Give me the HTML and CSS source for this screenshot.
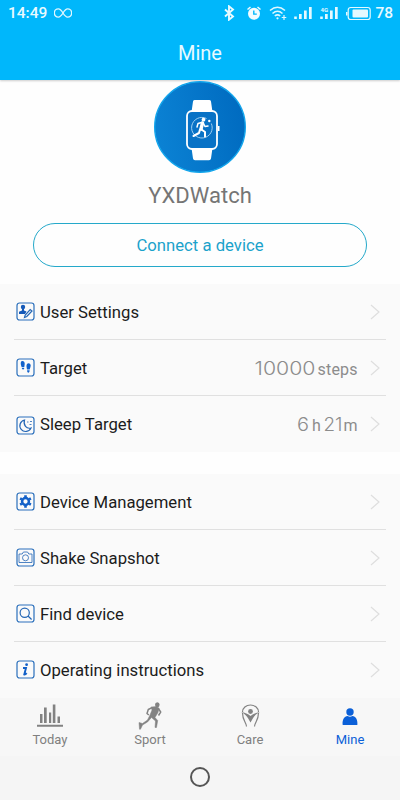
FILE: index.html
```html
<!DOCTYPE html>
<html lang="en">
<head>
    <meta charset="UTF-8">
    <meta name="viewport" content="width=device-width, initial-scale=1.0">
    <title>Mine</title>
    <link rel="stylesheet" href="styles.css">
</head>
<body>
    <header class="header">
        <div class="status-bar">
            <span class="time">14:49</span>
            <svg class="infinity" width="18" height="10" viewBox="0 0 18 10" fill="none" stroke="#dff7ff" stroke-width="1.4">
                <path d="M9 5C7.3 2.3 6 .9 4.4.9a4.1 4.1 0 0 0 0 8.200C6 9.100 7.300 7.700 9 5s3-4.100 4.600-4.100a4.100 4.100 0 0 1 0 8.200C12 9.100 10.700 7.700 9 5z"/>
            </svg>
            <svg class="status-icons" width="150" height="16" viewBox="222 4 150 16">
                <path d="M225 8.500l8 7-4 3.200V5.300l4 3.200-8 7" fill="none" stroke="#e9faff" stroke-width="1.900"/>
                <circle cx="254" cy="12.700" r="6" fill="#f2fcff"/>
                <path d="M247.500 8.500l3-2.500M260.500 8.500l-3-2.500" stroke="#f2fcff" stroke-width="1.500"/>
                <path d="M253.800 9.500v3.600h3" fill="none" stroke="#00b7fb" stroke-width="1.400"/>
                <g fill="none" stroke="#dff7ff" stroke-width="1.600">
                    <path d="M270 9.500q7.500-6.500 15 0M272.500 12.500q5-4.500 10 0M274.800 15q2.700-2.400 5.400 0"/>
                    <path d="M284 14v5M281.700 16.500h4.600" stroke-width="1.200"/>
                </g>
                <circle cx="277.500" cy="17.300" r="1.100" fill="#dff7ff"/>
                <g fill="#e4f9ff">
                    <path d="M294.200 15.500h2.600v2.500h-2.600zM299 13h2.700v5H299zM304 9.500h2.700V18H304zM309 6h2.700v12H309z"/>
                    <path d="M320.200 15.500h2.600v2.500h-2.600zM325 13h2.700v5H325zM330 9.500h2.700V18H330zM335 6h2.700v12H335z"/>
                    <text x="320.500" y="10.500" font-size="6" font-weight="700">4G</text>
                    <path d="M346 11h1.500v3.500H346z"/>
                    <rect x="352.500" y="8.500" width="15.500" height="8" rx="1"/>
                </g>
                <rect x="348.200" y="6.500" width="22" height="12" rx="2.500" fill="none" stroke="#e4f9ff" stroke-width="1.200"/>
            </svg>
            <span class="battery">78</span>
        </div>
        <h1>Mine</h1>
    </header>

    <section class="profile">
        <svg class="avatar" width="92" height="92" viewBox="0 0 92 92">
            <defs>
                <linearGradient id="disc" x1="0" y1=".6" x2="1" y2=".4">
                    <stop offset="0" stop-color="#0b82d4"/>
                    <stop offset="1" stop-color="#006bc0"/>
                </linearGradient>
            </defs>
            <circle cx="46" cy="46" r="45.300" fill="url(#disc)" stroke="#12a5ec" stroke-width="1.400"/>
            <path d="M39 20.500q0-1.500 1.500-1.500h15q1.500 0 1.500 1.500l1.500 10.500h-21zM37.500 67h21L57 77.500q-.3 1.800-2 1.800H41q-1.700 0-2-1.800z" fill="#fff"/>
            <rect x="33" y="30" width="30" height="38" rx="5" fill="#0872c6" stroke="#fff" stroke-width="1.800"/>
            <rect x="64" y="45" width="1.500" height="5" fill="#fff"/>
            <path d="M52.500 37.500a10.300 10.300 0 1 0 4.800 5" fill="none" stroke="#9fd0f2" stroke-width="1"/>
            <circle cx="55.300" cy="40" r="1.200" fill="#fff"/>
            <circle cx="49.500" cy="38.700" r="1.900" fill="#fff"/>
            <g fill="none" stroke="#fff" stroke-linecap="round" stroke-linejoin="round">
                <path d="M48.500 42l-1.500 6" stroke-width="3.400"/>
                <path d="M47.500 41.500l-3.500 1-1 3.500M49.500 42.500l1.500 3 3-.5" stroke-width="1.500"/>
                <path d="M47.500 48.500l3.500 2.500v4.500M46 48.500l-1 3.500-5.500 3" stroke-width="2"/>
            </g>
        </svg>
        <h2>YXDWatch</h2>
        <button class="connect">Connect a device</button>
    </section>

    <ul class="menu">
        <li>
            <svg class="icon" width="19" height="19" viewBox="0 0 19 19">
                <rect class="frame" x="1" y="1" width="17" height="17" rx="2.500"/>
                <circle cx="7" cy="5" r="2.200" fill="#1559b8"/>
                <path d="M6 7h2v1.500l2.500 1-1.500 2.500H3V9.700L6 8.500z" fill="#1559b8"/>
                <path class="line" d="M8.500 15.500l.7-2.500 5-5.500 1.800 1.500-5.200 5.500z"/>
            </svg>
            <span class="label">User Settings</span>
            <svg class="arrow" width="10" height="16" viewBox="0 0 10 16"><path d="M1 1l8 7-8 7"/></svg>
        </li>
        <li>
            <svg class="icon" width="19" height="19" viewBox="0 0 19 19">
                <rect class="frame" x="1" y="1" width="17" height="17" rx="2.500"/>
                <g fill="#1262cc">
                    <path d="M5.200 3.500c1.700-1.200 3.700.2 3.500 2.500L8.300 9H5.600C5 7 4.200 5 5.200 3.500zM5.700 9.800h2.500c.4 2-2 2.600-2.500 0z"/>
                    <path d="M11 6c1.200-1.300 3.500-.7 3.700 1.300 0 1.500-.5 2.700-1 4.200H11C10.700 9.500 10 7.500 11 6zM11.100 12.300h2.500c.2 3-2.700 3.200-2.500 0z"/>
                </g>
            </svg>
            <span class="label">Target</span>
            <svg class="value" width="105" height="24" viewBox="0 0 105 24">
                <text class="num" x="1.500" y="19" textLength="61" lengthAdjust="spacingAndGlyphs">10000</text>
                <text x="64.500" y="19" textLength="40">steps</text>
            </svg>
            <svg class="arrow" width="10" height="16" viewBox="0 0 10 16"><path d="M1 1l8 7-8 7"/></svg>
        </li>
        <li>
            <svg class="icon low" width="19" height="19" viewBox="0 0 19 19">
                <rect class="frame" x="1" y="1" width="17" height="17" rx="2.500"/>
                <path class="line" d="M8.500 4a5.800 5.800 0 1 0 6.500 8c-4.500 1.300-8-3-6.500-8z"/>
                <path class="line thin" d="M11 6h1.500M14 5.500h2M13.500 8.500h2"/>
            </svg>
            <span class="label">Sleep Target</span>
            <svg class="value" width="105" height="24" viewBox="0 0 105 24">
                <text class="num" x="44" y="19" textLength="12" lengthAdjust="spacingAndGlyphs">6</text>
                <text x="59" y="19">h</text>
                <text class="num" x="70.500" y="19" textLength="19" lengthAdjust="spacingAndGlyphs">21</text>
                <text x="90.500" y="19">m</text>
            </svg>
            <svg class="arrow" width="10" height="16" viewBox="0 0 10 16"><path d="M1 1l8 7-8 7"/></svg>
        </li>
    </ul>

    <ul class="menu">
        <li>
            <svg class="icon" width="19" height="19" viewBox="0 0 19 19">
                <rect class="frame" x="1" y="1" width="17" height="17" rx="2.500"/>
                <circle cx="9.500" cy="9.500" r="3.400" fill="none" stroke="#1260c8" stroke-width="2.500"/>
                <path d="M9.500 3.300v2M9.500 13.700v2M4.100 6.400l1.800 1M13.100 11.600l1.800 1M4.100 12.600l1.800-1M13.100 7.400l1.800-1" stroke="#1260c8" stroke-width="2.600"/>
            </svg>
            <span class="label">Device Management</span>
            <svg class="arrow" width="10" height="16" viewBox="0 0 10 16"><path d="M1 1l8 7-8 7"/></svg>
        </li>
        <li>
            <svg class="icon" width="19" height="19" viewBox="0 0 19 19">
                <rect class="frame" x="1" y="1" width="17" height="17" rx="2.500"/>
                <path class="line thin" d="M3 6h3.200l1.200-2h4.200l1.200 2H16v8.500H3z"/>
                <circle class="line thin" cx="9.500" cy="9.800" r="3"/>
            </svg>
            <span class="label">Shake Snapshot</span>
            <svg class="arrow" width="10" height="16" viewBox="0 0 10 16"><path d="M1 1l8 7-8 7"/></svg>
        </li>
        <li>
            <svg class="icon" width="19" height="19" viewBox="0 0 19 19">
                <rect class="frame" x="1" y="1" width="17" height="17" rx="2.500"/>
                <circle class="line" cx="8.700" cy="8.700" r="4.600"/>
                <path class="line" d="M12 12l3.600 3.500"/>
            </svg>
            <span class="label">Find device</span>
            <svg class="arrow" width="10" height="16" viewBox="0 0 10 16"><path d="M1 1l8 7-8 7"/></svg>
        </li>
        <li>
            <svg class="icon" width="19" height="19" viewBox="0 0 19 19">
                <rect class="frame" x="1" y="1" width="17" height="17" rx="2.500"/>
                <circle cx="10.600" cy="4.700" r="1.400" fill="#1260c8"/>
                <path d="M7 8h3l-1.700 6.500c.6.200 1.600-.4 2.400-1.300" fill="none" stroke="#1260c8" stroke-width="1.900"/>
            </svg>
            <span class="label">Operating instructions</span>
            <svg class="arrow" width="10" height="16" viewBox="0 0 10 16"><path d="M1 1l8 7-8 7"/></svg>
        </li>
    </ul>

    <nav class="tabs">
        <a class="tab">
            <svg width="30" height="28" viewBox="0 0 30 28" fill="#828282">
                <path d="M5 12h2.500v9H5zM9 5.500h2.700V21H9zM14 10.500h2.200V21H14zM17.800 2.500h2.600V21h-2.600zM22.500 14.500h2.500V21h-2.500zM2 22.800h26v2H2z"/>
            </svg>
            <span>Today</span>
        </a>
        <a class="tab">
            <svg width="30" height="28" viewBox="0 0 30 28" fill="#828282" stroke="#828282" stroke-linejoin="round">
                <ellipse cx="22.300" cy="2.800" rx="2.300" ry="2.500" stroke="none"/>
                <path d="M16 5l6-.5 2 2-1 4-3 5 2.700 3-1.200 7h-1.500l.5-6.500-4-3.500-4 4.500-5 3-2 4.200H4.500L4 20.500l3.500 1 5-3.500 2.500-5 2-5z" stroke-width=".5"/>
                <path d="M17 5.700l-3.700 1.800-1.300 4 1.800 1.500M23 6l2.700 4-2.200 3.500" fill="none" stroke-width="1.500"/>
            </svg>
            <span>Sport</span>
        </a>
        <a class="tab">
            <svg width="30" height="28" viewBox="0 0 30 28" fill="none" stroke="#828282">
                <path d="M7.500 10a8 7 0 0 1 16 0M11.500 24.500c0-4-4-6-4-13.500M19.500 24.500c0-4 4-6 4-13.500" stroke-width="1.200"/>
                <circle cx="15.500" cy="9.500" r="2.400" fill="#828282" stroke="none"/>
                <path d="M6 10c4 .5 7 2 9.500 4 2.500-2 5.500-3.500 9.500-4-3.500 1.500-6 4-7.200 6.500l-2.300 4-2.300-4C12 14 9.500 11.500 6 10z" fill="#828282" stroke="none"/>
            </svg>
            <span>Care</span>
        </a>
        <a class="tab active">
            <svg width="30" height="28" viewBox="0 0 30 28" fill="#0b60d8">
                <circle cx="15" cy="10" r="3.700"/>
                <path d="M7.600 22.500c-.4-5 1.700-8 5-8.500q2.400 1.500 4.800 0c3.300.5 5.400 3.500 5 8.500q0 .5-.7.500H8.300q-.7 0-.7-.5z"/>
            </svg>
            <span>Mine</span>
        </a>
    </nav>
    <footer class="system-nav"><div class="home"></div></footer>
</body>
</html>
```
FILE: styles.css
```css
* {
    box-sizing: border-box;
}
body {
    margin: 0;
    width: 400px;
    height: 800px;
    overflow: hidden;
    background-color: #fefefe;
    font-family: Roboto, sans-serif;
    color: #1c1c1c;
}
.header {
    height: 80px;
    background-color: #00b7fb;
    color: #e8faff;
    box-shadow: 0 1px 2px rgba(0, 0, 0, 0.2);
}
.status-bar {
    display: flex;
    align-items: center;
    height: 25px;
    padding: 0 7px 0 8px;
    font-size: 15.5px;
    font-weight: 500;
}
.infinity {
    margin-left: 7px;
}
.status-icons {
    margin-left: auto;
}
.battery {
    margin-left: 3px;
}
h1 {
    margin: 16px 0 0;
    font-size: 20px;
    font-weight: 400;
    line-height: 24px;
    text-align: center;
}
.profile {
    display: flex;
    flex-direction: column;
    align-items: center;
    height: 204px;
    padding-top: 1px;
}
.avatar {
    display: block;
}
h2 {
    margin: 9px 0 13px;
    font-size: 22px;
    font-weight: 400;
    line-height: 28px;
    color: #757575;
}
.connect {
    width: 334px;
    height: 44px;
    border: 1px solid #25a9ca;
    border-radius: 22px;
    background-color: transparent;
    color: #1ba2cb;
    font-family: inherit;
    font-size: 16.7px;
}
.menu {
    margin: 0;
    padding: 0 14px;
    list-style: none;
    background-color: #fafafa;
}
.menu + .menu {
    margin-top: 22px;
}
.menu li {
    display: flex;
    align-items: center;
    height: 56px;
    padding: 0 6px 0 2px;
    border-bottom: 1px solid #e0e0e0;
}
.menu li:last-child {
    border-bottom-color: transparent;
}
.icon.low {
    margin-top: 3px;
}
.frame {
    fill: none;
    stroke: #2a6fbb;
    stroke-width: 1.2;
}
.line {
    fill: none;
    stroke: #2466b5;
    stroke-width: 1.2;
}
.thin {
    stroke-width: 0.8;
}
.label {
    margin-left: 5px;
    padding-top: 2px;
    font-size: 16.7px;
}
.value {
    margin-left: auto;
    margin-right: 12px;
    font-size: 16px;
    fill: #8c8c8c;
}
.num {
    font-family: Inter, sans-serif;
    font-size: 18px;
    font-weight: 300;
}
.arrow {
    margin-left: auto;
    margin-top: 1px;
    fill: none;
    stroke: #dedede;
    stroke-width: 1.2;
}
.value + .arrow {
    margin-left: 0;
}
.tabs {
    display: flex;
    height: 58px;
    background-color: #f7f7f7;
}
.tab {
    flex: 1;
    display: flex;
    flex-direction: column;
    align-items: center;
    padding-top: 4px;
    font-size: 13px;
    line-height: 20px;
    color: #808080;
}
.tab.active {
    color: #0b60d8;
}
.system-nav {
    display: flex;
    justify-content: center;
    height: 46px;
    padding-top: 11px;
    background-color: #f5f5f5;
}
.home {
    width: 20px;
    height: 20px;
    border: 2px solid #555;
    border-radius: 50%;
}
```
